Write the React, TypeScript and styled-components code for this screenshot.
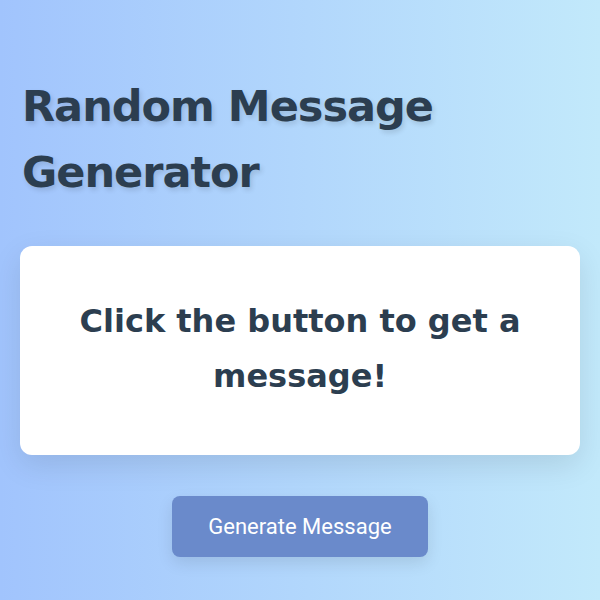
import React, { useState } from 'react'
import styled, { createGlobalStyle } from 'styled-components'

const GlobalStyle = createGlobalStyle`
  html, body {
    margin: 0;
    padding: 0;
  }
  body {
    min-height: 100vh;
    background: linear-gradient(to right, #a1c4fd, #c2e9fb);
    font-family: Roboto, "Liberation Sans", sans-serif;
  }
`

const Page = styled.div`
  min-height: 100vh;
  box-sizing: border-box;
  padding: 73px 20px 40px;
  display: flex;
  flex-direction: column;
  align-items: stretch;
`

const Title = styled.h1`
  margin: 0 0 41px 2px;
  font-family: "DejaVu Sans", "Open Sans", sans-serif;
  font-weight: 700;
  font-size: 43px;
  line-height: 66px;
  color: #2c3e50;
  letter-spacing: -1px;
  text-shadow: 2px 3px 5px rgba(0, 0, 0, 0.12);
`

const Card = styled.div`
  background: #ffffff;
  border-radius: 12px;
  box-shadow: 0 10px 30px rgba(0, 0, 0, 0.1);
  height: 209px;
  box-sizing: border-box;
  padding: 0 40px 3px;
  display: flex;
  align-items: center;
  justify-content: center;
`

const Message = styled.p`
  margin: 0;
  text-align: center;
  font-family: "DejaVu Sans", "Open Sans", sans-serif;
  font-weight: 600;
  font-size: 32px;
  line-height: 55px;
  color: #2c3e50;
`

const Actions = styled.div`
  display: flex;
  justify-content: center;
  margin-top: 41px;
`

const GenerateButton = styled.button`
  width: 256px;
  height: 61px;
  border: none;
  border-radius: 8px;
  background: #6a8acb;
  color: #ffffff;
  font-family: Roboto, "Liberation Sans", sans-serif;
  font-size: 22px;
  box-shadow: 0 6px 16px rgba(0, 0, 0, 0.1);
  cursor: pointer;
`

const messages = [
  'Have a wonderful day!',
  'Keep going, you are doing great.',
  'Something good is on its way.',
  'Take a deep breath and smile.',
]

export default function App() {
  const [message, setMessage] = useState('Click the button to get a message!')

  const pick = () => {
    setMessage(messages[Math.floor(Math.random() * messages.length)])
  }

  return (
    <>
      <GlobalStyle />
      <Page>
        <Title>
          Random Message
          <br />
          Generator
        </Title>
        <Card>
          <Message>{message}</Message>
        </Card>
        <Actions>
          <GenerateButton onClick={pick}>Generate Message</GenerateButton>
        </Actions>
      </Page>
    </>
  )
}
